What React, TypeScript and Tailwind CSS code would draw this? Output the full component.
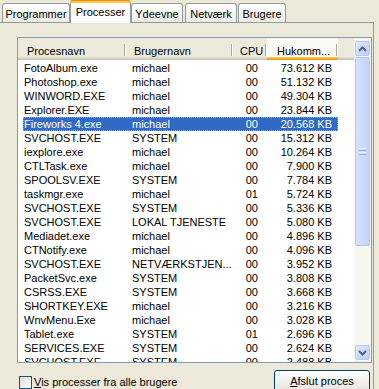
import React from "react";

type Row = [string, string, string, string];

const rows: Row[] = [
  ["FotoAlbum.exe", "michael", "00", "73.612 KB"],
  ["Photoshop.exe", "michael", "00", "51.132 KB"],
  ["WINWORD.EXE", "michael", "00", "49.304 KB"],
  ["Explorer.EXE", "michael", "00", "23.844 KB"],
  ["Fireworks 4.exe", "michael", "00", "20.568 KB"],
  ["SVCHOST.EXE", "SYSTEM", "00", "15.312 KB"],
  ["iexplore.exe", "michael", "00", "10.264 KB"],
  ["CTLTask.exe", "michael", "00", "7.900 KB"],
  ["SPOOLSV.EXE", "SYSTEM", "00", "7.784 KB"],
  ["taskmgr.exe", "michael", "01", "5.724 KB"],
  ["SVCHOST.EXE", "SYSTEM", "00", "5.336 KB"],
  ["SVCHOST.EXE", "LOKAL TJENESTE", "00", "5.080 KB"],
  ["Mediadet.exe", "michael", "00", "4.896 KB"],
  ["CTNotify.exe", "michael", "00", "4.096 KB"],
  ["SVCHOST.EXE", "NETVÆRKSTJEN...", "00", "3.952 KB"],
  ["PacketSvc.exe", "SYSTEM", "00", "3.808 KB"],
  ["CSRSS.EXE", "SYSTEM", "00", "3.668 KB"],
  ["SHORTKEY.EXE", "michael", "00", "3.216 KB"],
  ["WnvMenu.Exe", "michael", "00", "3.028 KB"],
  ["Tablet.exe", "SYSTEM", "01", "2.696 KB"],
  ["SERVICES.EXE", "SYSTEM", "00", "2.624 KB"],
  ["SVCHOST.EXE", "SYSTEM", "00", "2.488 KB"],
];

const SELECTED = 4;

function Tab({ label, className }: { label: string; className: string }) {
  return (
    <div
      className={`h-[19px] flex items-center justify-center pt-[2px] border border-b-0 border-[#919B9C] rounded-t-[3px] bg-linear-to-b from-white to-[#ECEBE5] ${className}`}
    >
      {label}
    </div>
  );
}

function HeaderCell({ label, className, hot }: { label: string; className: string; hot?: boolean }) {
  return (
    <div
      className={`relative h-full flex items-center pt-[4px] whitespace-nowrap ${
        hot
          ? "bg-[#FAF9F4] shadow-[inset_0_-1px_0_#E5A01A,inset_0_-2px_0_#F8B020,inset_0_-3px_0_#FAC85A]"
          : "bg-[#EBEADB] shadow-[inset_0_-1px_0_#CBC7B8,inset_0_-2px_0_#D6D2C2,inset_0_-3px_0_#E2DECD]"
      } ${className}`}
    >
      {label}
      <div className="absolute right-0 top-[6px] h-[12px] w-[2px] flex">
        <div className="w-[1px] bg-[#ACA899]" />
        <div className="w-[1px] bg-white" />
      </div>
    </div>
  );
}

function Arrow({ up }: { up?: boolean }) {
  return (
    <svg width="9" height="6" viewBox="0 0 9 6">
      <path
        d={up ? "M1 5 L4.5 1.5 L8 5" : "M1 1 L4.5 4.5 L8 1"}
        fill="none"
        stroke="#4D6185"
        strokeWidth="2"
      />
    </svg>
  );
}

function ScrollButton({ up }: { up?: boolean }) {
  return (
    <div className="h-[17px] w-[17px] p-[1px]">
      <div className="h-full w-full rounded-[2px] border border-[#B4C8F6] bg-linear-to-br from-[#E1EAFE] to-[#B9CEFA] flex items-center justify-center">
        <Arrow up={up} />
      </div>
    </div>
  );
}

export default function App() {
  return (
    <div className="w-[379px] h-[389px] overflow-hidden bg-[#ECE9D8] font-['Liberation_Sans',Arial,sans-serif] text-[11px] text-black leading-none select-none">
      {/* tab strip */}
      <div className="relative z-10 flex items-end h-[22px] pl-[2px]">
        <Tab label="Programmer" className="w-[68px]" />
        <div className="w-[61px] h-[23px] -mb-[1px] flex flex-col">
          <div className="h-[3px] rounded-t-[3px] bg-[#FFC83C] border-t border-[#E68B2C]" />
          <div className="flex-1 flex justify-center pt-[4px] bg-[#FCFCFE] border-x border-[#919B9C]">
            Processer
          </div>
        </div>
        <Tab label="Ydeevne" className="w-[52px]" />
        <Tab label="Netværk" className="ml-[2px] w-[52px]" />
        <Tab label="Brugere" className="ml-[1px] w-[48px]" />
      </div>

      {/* tab page */}
      <div className="w-[374px] h-[367px] border-t border-r border-[#919B9C] pl-[17px] pt-[14px]">
        <div className="w-[355px] h-[326px] border border-[#7F9DB9] bg-white flex">
          <div className="w-[336px] flex flex-col overflow-hidden">
            {/* header */}
            <div className="h-[22px] flex shrink-0">
              <HeaderCell label="Procesnavn" className="w-[108px] pl-[9px]" />
              <HeaderCell label="Brugernavn" className="w-[107px] pl-[8px]" />
              <HeaderCell label="CPU" className="w-[34px] pl-[7px]" />
              <HeaderCell label="Hukomm..." className="w-[71px] pl-[10px]" hot />
              <div className="flex-1 bg-[#EBEADB] shadow-[inset_0_-1px_0_#CBC7B8,inset_0_-2px_0_#D6D2C2,inset_0_-3px_0_#E2DECD]" />
            </div>
            {/* rows */}
            <div className="pt-[1px]">
              {rows.map((r, i) => (
                <div key={i} className="h-[14px] flex pl-[5px]">
                  <div
                    className={`flex w-[315px] items-center whitespace-nowrap ${
                      i === SELECTED
                        ? "bg-[#316AC5] text-white outline-1 outline-dotted outline-[#D9A040] -outline-offset-1"
                        : ""
                    }`}
                  >
                    <div className="w-[103px] pl-[1px] overflow-hidden">{r[0]}</div>
                    <div className="w-[107px] pl-[6px] overflow-hidden">{r[1]}</div>
                    <div className="w-[34px] pr-[9px] text-right">{r[2]}</div>
                    <div className="w-[71px] pr-[6px] text-right">{r[3]}</div>
                  </div>
                </div>
              ))}
            </div>
          </div>

          {/* scrollbar */}
          <div className="w-[17px] flex flex-col pt-[2px] pb-[1px] bg-[#F7F7F2]">
            <ScrollButton up />
            <div className="flex-1 flex flex-col">
              <div className="h-[189px] px-[1px]">
                <div className="h-full rounded-[2px] border border-[#B4C8F6] bg-linear-to-r from-[#D5E1FD] to-[#C2D4FB] flex flex-col items-center justify-center gap-[1px]">
                  <div className="w-[7px] h-[1px] bg-[#EEF4FE]" />
                  <div className="w-[7px] h-[1px] bg-[#8CB0F8]" />
                  <div className="w-[7px] h-[1px] bg-[#EEF4FE]" />
                  <div className="w-[7px] h-[1px] bg-[#8CB0F8]" />
                </div>
              </div>
            </div>
            <ScrollButton />
          </div>
        </div>

        {/* bottom row */}
        <div className="w-[355px] flex justify-between">
          <div className="flex items-center mt-[9px] ml-[2px]">
            <div className="w-[13px] h-[13px] border border-[#1C5180] bg-linear-to-br from-[#DCDCD7] to-white" />
            <span className="ml-[2px]">
              <span className="underline">V</span>is processer fra alle brugere
            </span>
          </div>
          <div className="mt-[7px] mr-[2px] w-[96px] h-[23px] rounded-[3px] border border-[#003C74] bg-linear-to-b from-white to-[#E3E2DA] flex items-center justify-center">
            <span>
              <span className="underline">A</span>fslut proces
            </span>
          </div>
        </div>
      </div>
    </div>
  );
}
